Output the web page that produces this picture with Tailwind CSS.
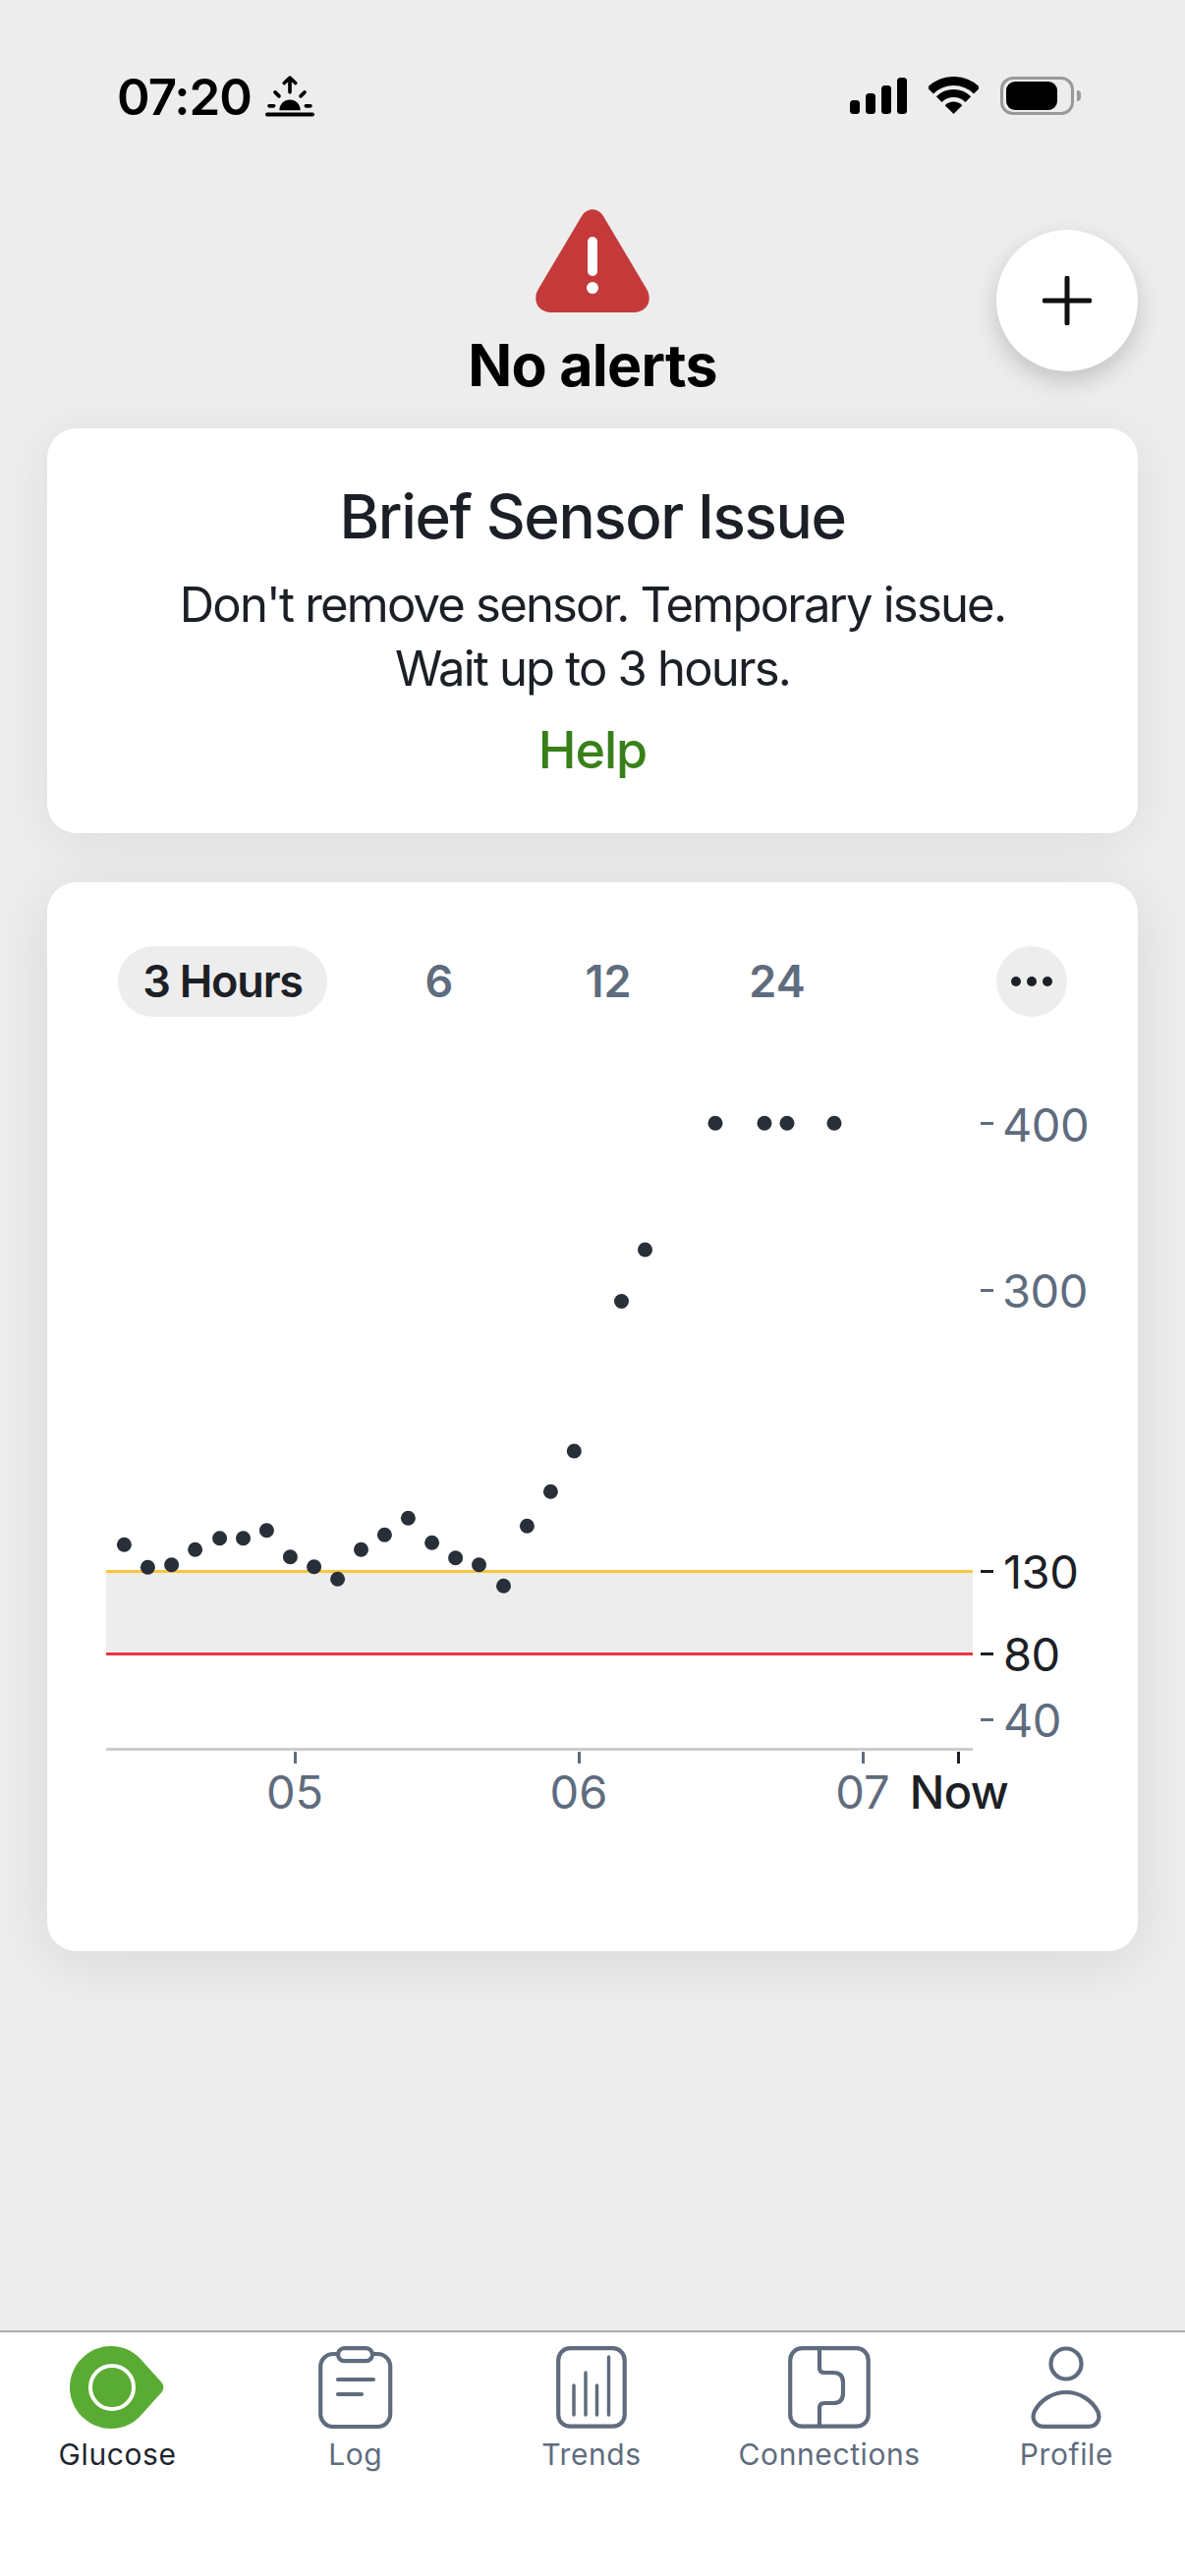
<!DOCTYPE html>
<html lang="en">
<head>
<meta charset="utf-8">
<title>Glucose</title>
<script src="https://cdn.jsdelivr.net/npm/@tailwindcss/browser@4"></script>
</head>
<body class="m-0">
<div class="relative flex flex-col w-[1206px] h-[2622px] overflow-hidden bg-[#ededed] text-[#1c2026] [font-family:Inter,sans-serif]">

  <!-- status bar -->
  <div class="flex justify-between items-start pt-[77px] pl-[119px] pr-[113px] h-[213px]">
    <div class="flex items-center gap-[14px]">
      <span class="text-[51px] leading-[41px] font-semibold tracking-[-1px] text-black">07:20</span>
      <svg width="50" height="42" viewBox="0 0 150 125" fill="none" stroke="#000" stroke-linecap="round" stroke-linejoin="round">
        <path d="M6 118H144" stroke-width="12"/>
        <path d="M43 105a32 32 0 0 1 64 0z" fill="#000" stroke="none"/>
        <path d="M12 92H26M124 92H138M30 50L42 62M120 50L108 62" stroke-width="11"/>
        <path d="M75 10V50M58 22L75 6L92 22" stroke-width="11"/>
      </svg>
    </div>
    <div class="flex items-start">
      <svg width="58" height="37" viewBox="0 0 58 37" class="mt-[2px]">
        <rect x="0" y="23" width="10" height="14" rx="3.5"/>
        <rect x="16" y="16" width="10" height="21" rx="3.5"/>
        <rect x="32" y="8" width="10" height="29" rx="3.5"/>
        <rect x="48" y="0" width="10" height="37" rx="3.5"/>
      </svg>
      <svg width="51" height="38" viewBox="0 0 51 38" fill="none" class="ml-[22px] mt-[1px]">
        <path d="M1.8 14.3A33.5 33.5 0 0 1 49.2 14.3" stroke="#000" stroke-width="9"/>
        <path d="M10.65 23.15A21 21 0 0 1 40.35 23.15" stroke="#000" stroke-width="8"/>
        <path d="M25.5 38L16.7 29.2A12.5 12.5 0 0 1 34.3 29.2Z" fill="#000"/>
      </svg>
      <div class="relative ml-[22px] w-[75px] h-[39px] rounded-[13px] border-[3px] border-[#999] mt-[1px]">
        <div class="absolute left-[3px] top-[2px] w-[52px] h-[29px] rounded-[9px] bg-black"></div>
        <div class="absolute right-[-10px] top-[11px] w-[4px] h-[11px] rounded-r-full bg-[#999]"></div>
      </div>
    </div>
  </div>

  <!-- alert header -->
  <div class="flex flex-col items-center">
    <svg width="116" height="105" viewBox="0 0 116 105">
      <path d="M47 7C52 -2 64 -2 69 7L113 81C120 93 113 105 100 105L16 105C3 105 -4 93 3 81Z" fill="#c43a3a"/>
      <path d="M58 33V63" stroke="#fff" stroke-width="10" stroke-linecap="round"/>
      <circle cx="58" cy="80" r="6" fill="#fff"/>
    </svg>
    <div class="mt-[19px] h-[99px] text-[59px] leading-[70px] font-bold tracking-[-0.7px] text-black">No alerts</div>
  </div>

  <!-- add button -->
  <div class="absolute left-[1014px] top-[234px] flex items-center justify-center w-[144px] h-[144px] rounded-full bg-white shadow-[0_10px_24px_rgba(0,0,0,0.18)]">
    <svg width="50" height="50" viewBox="0 0 50 50"><path d="M25 2V48M2 25H48" stroke="#111" stroke-width="5" stroke-linecap="round"/></svg>
  </div>

  <!-- sensor card -->
  <div class="flex flex-col items-center mx-[48px] h-[412px] pt-[53px] rounded-[30px] bg-white text-center shadow-[0_8px_50px_rgba(0,0,0,0.07)]">
    <div class="text-[62px] leading-[74px] font-medium tracking-[-1.4px]">Brief Sensor Issue</div>
    <div class="mt-[20px] text-[49px] leading-[65px] tracking-[-1.8px]">Don't remove sensor. Temporary issue.<br>Wait up to 3 hours.</div>
    <div class="mt-[19px] text-[52px] leading-[64px] font-medium tracking-[-1px] text-[#38801a]">Help</div>
  </div>

  <!-- chart card -->
  <div class="relative mt-[50px] mx-[48px] h-[1088px] rounded-[30px] bg-white shadow-[0_10px_60px_rgba(0,0,0,0.09)]">
    <div class="flex items-center pt-[65px] pl-[72px] pr-[72px]">
      <div class="flex items-center justify-center w-[213px] h-[72px] rounded-full bg-[#ededed] text-[45px] font-semibold tracking-[-1.2px]">3 Hours</div>
      <div class="w-[172px] ml-[28px] text-center text-[45px] font-semibold text-[#5f6c7e]">6</div>
      <div class="w-[172px] text-center text-[45px] font-semibold text-[#5f6c7e]">12</div>
      <div class="w-[172px] text-center text-[45px] font-semibold text-[#5f6c7e]">24</div>
      <div class="flex items-center justify-center gap-[6px] ml-auto w-[72px] h-[72px] rounded-full bg-[#ededed]">
        <span class="w-[10px] h-[10px] rounded-full bg-[#1c2026]"></span>
        <span class="w-[10px] h-[10px] rounded-full bg-[#1c2026]"></span>
        <span class="w-[10px] h-[10px] rounded-full bg-[#1c2026]"></span>
      </div>
    </div>

    <svg class="absolute left-0 top-0" width="1110" height="1088" viewBox="48 898 1110 1088">
      <rect x="108" y="1600" width="882" height="83" fill="#ededed"/>
      <rect x="108" y="1598" width="882" height="3" fill="#f9c73b"/>
      <rect x="108" y="1682" width="882" height="3" fill="#ee3342"/>
      <rect x="108" y="1779" width="882" height="3" fill="#cccccc"/>
      <g fill="#5f6c7e">
        <rect x="299" y="1783" width="3" height="12"/>
        <rect x="588" y="1783" width="3" height="12"/>
        <rect x="877" y="1783" width="3" height="12"/>
        <rect x="998" y="1142" width="13" height="3"/>
        <rect x="998" y="1312" width="13" height="3"/>
        <rect x="998" y="1749" width="13" height="3"/>
      </g>
      <g fill="#1c2026">
        <rect x="974" y="1783" width="3" height="12"/>
        <rect x="998" y="1598" width="13" height="3"/>
        <rect x="998" y="1682" width="13" height="3"/>
      </g>
      <g fill="#282f38">
        <circle cx="126.4" cy="1572.3" r="7.5"/><circle cx="150.4" cy="1595.3" r="7.5"/>
        <circle cx="174.6" cy="1592.7" r="7.5"/><circle cx="198.6" cy="1577.3" r="7.5"/>
        <circle cx="223.6" cy="1565.7" r="7.5"/><circle cx="247.5" cy="1565.7" r="7.5"/>
        <circle cx="271.4" cy="1557.7" r="7.5"/><circle cx="295.4" cy="1584.7" r="7.5"/>
        <circle cx="319.6" cy="1594.7" r="7.5"/><circle cx="343.6" cy="1607.3" r="7.5"/>
        <circle cx="367.5" cy="1577.3" r="7.5"/><circle cx="391.4" cy="1562.3" r="7.5"/>
        <circle cx="415.4" cy="1545.3" r="7.5"/><circle cx="439.6" cy="1570.3" r="7.5"/>
        <circle cx="463.6" cy="1585.7" r="7.5"/><circle cx="487.5" cy="1592.7" r="7.5"/>
        <circle cx="512.5" cy="1614.3" r="7.5"/><circle cx="536.4" cy="1553.3" r="7.5"/>
        <circle cx="560.4" cy="1518.3" r="7.5"/><circle cx="584.3" cy="1477" r="7.5"/>
        <circle cx="632.5" cy="1324.5" r="7.5"/><circle cx="656.5" cy="1272" r="7.5"/>
        <circle cx="728" cy="1143.3" r="7.5"/><circle cx="778" cy="1143.3" r="7.5"/>
        <circle cx="801" cy="1143.3" r="7.5"/><circle cx="849" cy="1143.3" r="7.5"/>
      </g>
    </svg>

    <!-- y axis -->
    <span class="absolute left-[972px] top-[246px] -translate-y-1/2 text-[47px] leading-none tracking-[-0.5px] text-[#5f6c7e]">400</span>
    <span class="absolute left-[972px] top-[415px] -translate-y-1/2 text-[47px] leading-none tracking-[-0.5px] text-[#5f6c7e]">300</span>
    <span class="absolute left-[973px] top-[701px] -translate-y-1/2 text-[47px] leading-none tracking-[-0.5px]">130</span>
    <span class="absolute left-[973px] top-[785px] -translate-y-1/2 text-[47px] leading-none tracking-[-0.5px]">80</span>
    <span class="absolute left-[973px] top-[852px] -translate-y-1/2 text-[47px] leading-none tracking-[-0.5px] text-[#5f6c7e]">40</span>
    <!-- x axis -->
    <span class="absolute left-[252px] top-[925px] -translate-x-1/2 -translate-y-1/2 text-[47px] leading-none text-[#5f6c7e]">05</span>
    <span class="absolute left-[541px] top-[925px] -translate-x-1/2 -translate-y-1/2 text-[47px] leading-none text-[#5f6c7e]">06</span>
    <span class="absolute left-[830px] top-[925px] -translate-x-1/2 -translate-y-1/2 text-[47px] leading-none text-[#5f6c7e]">07</span>
    <span class="absolute left-[928px] top-[925px] -translate-x-1/2 -translate-y-1/2 text-[47px] leading-none tracking-[-0.5px] font-medium">Now</span>
  </div>

  <!-- tab bar -->
  <div class="mt-auto grid grid-cols-5 h-[250px] pt-[14px] border-t-2 border-[#aaaaaa] bg-white text-[30px] leading-[36px] tracking-[0.02em] text-[#5f6c7e]">
    <div class="flex flex-col items-center -translate-x-[1px]">
      <svg width="96" height="84" viewBox="0 0 96 84" class="h-[84px] -translate-x-[1px]">
        <path d="M42 0C53 0 63 4 71 12L93.5 37C96 40 96 44 93.500 47L71 72C63 80 53 84 42 84C19 84 0 65 0 42C0 19 19 0 42 0Z" fill="#5aab33"/>
        <circle cx="43" cy="42" r="22" fill="none" stroke="#fff" stroke-width="4"/>
      </svg>
      <span class="mt-[8px] text-[#1f262f]">Glucose</span>
    </div>
    <div class="flex flex-col items-center">
      <svg width="76" height="84" viewBox="0 0 76 84" fill="none" stroke="#5f6c7e" stroke-width="4.200" stroke-linecap="round">
        <rect x="2.200" y="8" width="71" height="74" rx="13"/>
        <rect x="20" y="2.200" width="35" height="13" rx="6.500" fill="#fff"/>
        <path d="M20 34H56M20 49H44"/>
      </svg>
      <span class="mt-[8px]">Log</span>
    </div>
    <div class="flex flex-col items-center -translate-x-[1px]">
      <svg width="72" height="84" viewBox="0 0 72 84" fill="none" stroke="#5f6c7e" stroke-width="4.200" stroke-linecap="round">
        <rect x="2.200" y="2.200" width="67.500" height="79.500" rx="12"/>
        <path d="M18 40V70M30 27V70M41.500 40V70M53.500 11V70" stroke-width="3.500"/>
      </svg>
      <span class="mt-[8px]">Trends</span>
    </div>
    <div class="flex flex-col items-center">
      <svg width="84" height="84" viewBox="0 0 84 84" fill="none" stroke="#5f6c7e" stroke-width="4.200">
        <rect x="2.200" y="2.200" width="79.500" height="79.500" rx="12"/>
        <path d="M32 2V22Q32 27 37 27H46Q56 27 56 37V48Q56 58 46 58H37Q32 58 32 63V82"/>
      </svg>
      <span class="mt-[8px]">Connections</span>
    </div>
    <div class="flex flex-col items-center">
      <svg width="72" height="84" viewBox="0 0 72 84" fill="none" stroke="#5f6c7e" stroke-width="4.200">
        <circle cx="36" cy="18" r="15.500"/>
        <path d="M36 47C50 47 62 55 68 66C72 74 67 81.800 59 81.800H13C5 81.800 0 74 4 66C10 55 22 47 36 47Z"/>
      </svg>
      <span class="mt-[8px]">Profile</span>
    </div>
  </div>
</div>
</body>
</html>
